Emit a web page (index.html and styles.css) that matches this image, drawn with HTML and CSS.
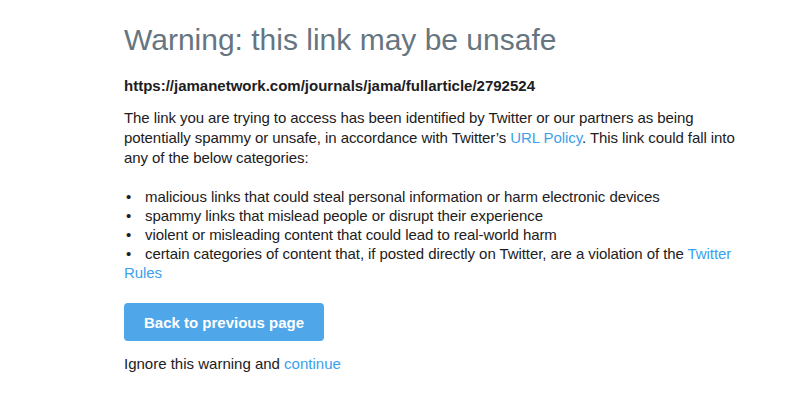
FILE: index.html
```html
<!DOCTYPE html>
<html>
<head>
<meta charset="utf-8">
<link rel="stylesheet" href="styles.css">
</head>
<body>
<main class="page">
  <h1 class="title">Warning: this link may be unsafe</h1>
  <p class="url">https://jamanetwork.com/journals/jama/fullarticle/2792524</p>
  <p class="text">The link you are trying to access has been identified by Twitter or our partners as being potentially spammy or unsafe, in accordance with Twitter’s <a href="#">URL Policy</a>. This link could fall into any of the below categories:</p>
  <ul class="list">
    <li>malicious links that could steal personal information or harm electronic devices</li>
    <li>spammy links that mislead people or disrupt their experience</li>
    <li>violent or misleading content that could lead to real-world harm</li>
    <li>certain categories of content that, if posted directly on Twitter, are a violation of the <a href="#">Twitter Rules</a></li>
  </ul>
  <button class="btn" type="button">Back to previous page</button>
  <p class="ignore">Ignore this warning and <a href="#">continue</a></p>
</main>
</body>
</html>
```
FILE: styles.css
```css
html, body {
  margin: 0;
  padding: 0;
  background: #ffffff;
}
body {
  font-family: "Liberation Sans", Arial, sans-serif;
  color: #1c2022;
  font-size: 15px;
  line-height: 20px;
}
.page {
  width: 626px;
  padding: 22px 0 0 124px;
}
.title {
  margin: 0;
  font-size: 30px;
  line-height: 36px;
  font-weight: normal;
  color: #66757f;
}
.url {
  margin: 18px 0 0;
  font-weight: bold;
  font-size: 15px;
}
.text {
  margin: 12px 0 0;
  letter-spacing: -0.08px;
}
a {
  color: #3ba1ec;
  text-decoration: none;
}
.list {
  list-style: none;
  margin: 19px 0 0;
  padding: 0;
  line-height: 19px;
  letter-spacing: -0.08px;
}
.list li::before {
  content: "•";
  display: inline-block;
  width: 21px;
  padding-left: 2px;
  box-sizing: border-box;
}
.btn {
  display: block;
  margin: 21px 0 0;
  width: 200px;
  height: 38px;
  border: 0;
  border-radius: 4px;
  background: #4fa6e8;
  color: #ffffff;
  font-family: "Liberation Sans", Arial, sans-serif;
  font-weight: bold;
  font-size: 15px;
  padding: 0;
}
.ignore {
  margin: 13px 0 0;
}
```
